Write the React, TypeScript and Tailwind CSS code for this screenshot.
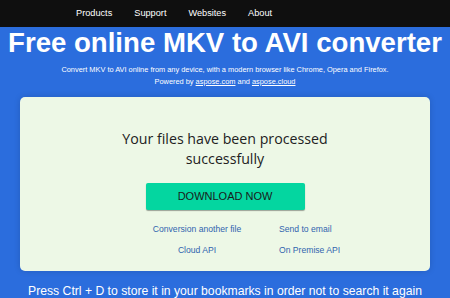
import React from "react";

const navItems = ["Products", "Support", "Websites", "About"];

export default function App() {
  return (
    <div className="w-[450px] h-[298px] overflow-hidden bg-[#2b6ddd] font-['Liberation_Sans',Arial,sans-serif] text-white">
      {/* Top nav */}
      <nav className="h-[27px] bg-[#0f0f0f] flex items-center pl-[76px] gap-[22px] text-[9.2px]">
        {navItems.map((item) => (
          <span key={item} className="text-white">
            {item}
          </span>
        ))}
      </nav>

      {/* Header */}
      <div className="flex flex-col items-center">
        <h1 className="whitespace-nowrap text-[27.6px] leading-[32px] font-bold">
          Free online MKV to AVI converter
        </h1>
        <p className="mt-[5px] whitespace-nowrap text-[7.4px] leading-[11px]">
          Convert MKV to AVI online from any device, with a modern browser like Chrome, Opera and Firefox.
        </p>
        <p className="mt-[1px] text-[7.4px] leading-[11px]">
          Powered by <span className="underline">aspose.com</span> and{" "}
          <span className="underline">aspose.cloud</span>
        </p>
      </div>

      {/* Result card */}
      <div className="mx-[20px] mt-[10px] h-[174px] rounded-[5px] bg-[#edf8e6] shadow-[0_0_6px_rgba(0,0,0,0.15)] flex flex-col items-center">
        <p className="mt-[32px] text-center text-[#222] text-[14.2px] leading-[20px] font-['Open_Sans',sans-serif]">
          Your files have been processed
          <br />
          successfully
        </p>
        <button className="mt-[14px] w-[159px] h-[27px] rounded-[2px] bg-[#04d6a0] text-[#1a1a1a] text-[11px] shadow-[0_1px_1px_rgba(0,0,0,0.35)]">
          DOWNLOAD NOW
        </button>
        <div className="self-start ml-[130px] mt-[14px] grid grid-cols-[94px_80px] gap-x-[35px] gap-y-[10px] text-[8.6px] leading-[11px] text-[#3064ae]">
          <span className="text-center whitespace-nowrap">Conversion another file</span>
          <span className="whitespace-nowrap">Send to email</span>
          <span className="text-center">Cloud API</span>
          <span className="whitespace-nowrap">On Premise API</span>
        </div>
      </div>

      <p className="mt-[12px] whitespace-nowrap text-center text-[12.2px] leading-[16px]">
        Press Ctrl + D to store it in your bookmarks in order not to search it again
      </p>
    </div>
  );
}
